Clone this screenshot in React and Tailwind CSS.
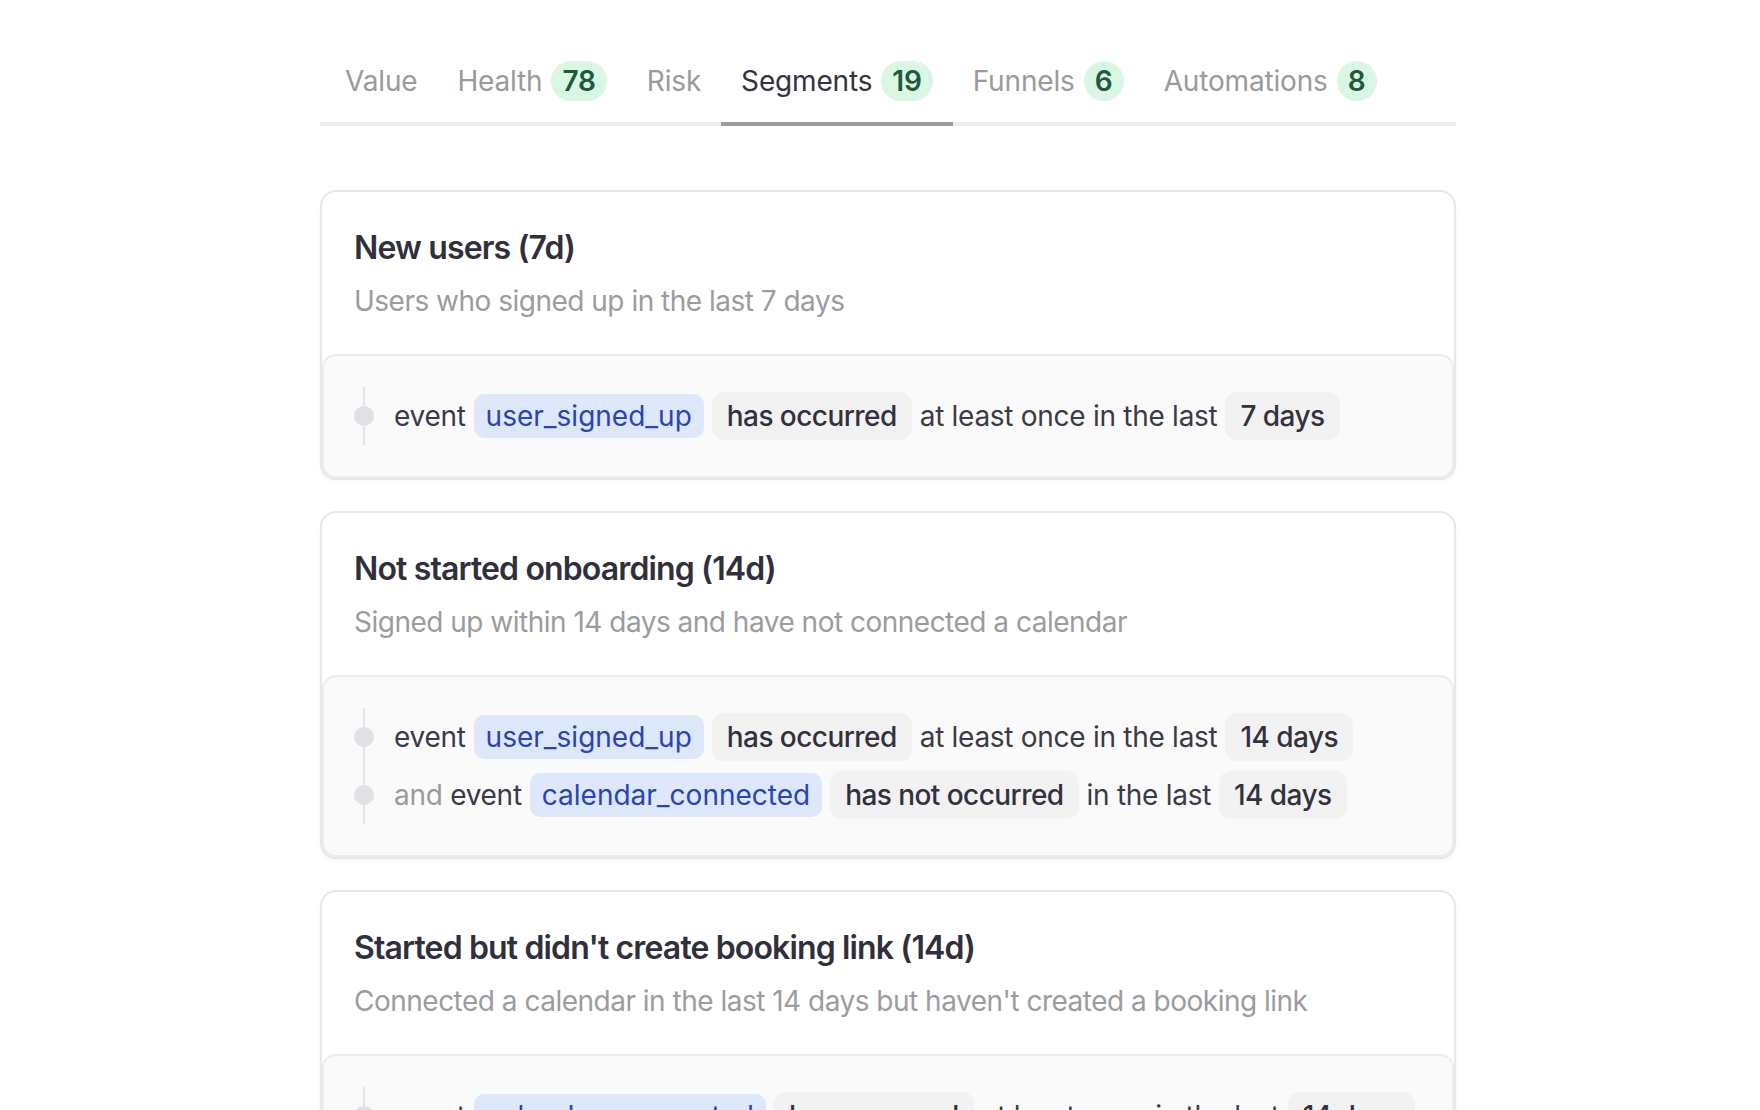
import React from 'react';

const tabs = [
    { label: 'Value' },
    { label: 'Health', count: 78 },
    { label: 'Risk' },
    { label: 'Segments', count: 19, active: true },
    { label: 'Funnels', count: 6 },
    { label: 'Automations', count: 8 },
];

const segments = [
    {
        name: 'New users (7d)',
        description: 'Users who signed up in the last 7 days',
        rules: [
            { event: 'user_signed_up', op: 'has occurred', text: 'at least once in the last', window: '7 days' },
        ],
    },
    {
        name: 'Not started onboarding (14d)',
        description: 'Signed up within 14 days and have not connected a calendar',
        rules: [
            { event: 'user_signed_up', op: 'has occurred', text: 'at least once in the last', window: '14 days' },
            { and: true, event: 'calendar_connected', op: 'has not occurred', text: 'in the last', window: '14 days' },
        ],
    },
    {
        name: "Started but didn't create booking link (14d)",
        description: "Connected a calendar in the last 14 days but haven't created a booking link",
        rules: [
            { event: 'calendar_connected', op: 'has occurred', text: 'at least once in the last', window: '14 days' },
            { and: true, event: 'booking_link_created', op: 'has not occurred', text: 'in the last', window: '14 days' },
        ],
    },
];

const Tab = ({ label, count, active }) => (
    <button
        type="button"
        className={
            '-mb-[4px] flex items-center gap-[9px] border-b-[4px] px-[20px] pt-[20px] pb-[21px] text-[28px] tracking-[-0.006em] ' +
            (active ? 'border-[#9b9b9d] text-[#34343f]' : 'border-transparent text-[#9a9a9c]')
        }
    >
        <span className="leading-[40px]">{label}</span>
        {count !== undefined && (
            <span className="flex h-[40px] min-w-[40px] items-center justify-center rounded-full bg-[#daf7e6] px-[11px] font-semibold text-[#1f5a3d]">
                {count}
            </span>
        )}
    </button>
);

const grayPill = 'flex h-[48px] items-center rounded-[12px] bg-[#f2f2f3] px-[15px] font-medium tracking-[-0.02em] text-[#32323e]';

const RuleRow = ({ rule }) => (
    <div className="flex h-[58px] items-center">
        {/* timeline rail with a dot per condition */}
        <div className="relative flex h-full w-[20px] shrink-0 items-center justify-center">
            <div className="absolute inset-y-0 left-[9px] w-[2px] bg-[#e4e4ea]" />
            <div className="relative h-[20px] w-[20px] rounded-full bg-[#e0e0e7]" />
        </div>
        <div className="ml-[20px] flex items-center gap-[8px] whitespace-nowrap text-[28px] tracking-[-0.01em] text-[#3a3a48]">
            <span>
                {rule.and && <span className="text-[#9a9a9c]">and </span>}
                event
            </span>
            <span className="flex h-[44px] items-center rounded-[10px] bg-[#dde8fb] px-[12px] tracking-normal text-[#2a44b5]">{rule.event}</span>
            <span className={grayPill}>{rule.op}</span>
            <span>{rule.text}</span>
            <span className={grayPill}>{rule.window}</span>
        </div>
    </div>
);

const SegmentCard = ({ segment }) => (
    <div className="rounded-[16px] border-[2px] border-[#e6e6eb] bg-white shadow-[0_2px_4px_rgba(0,0,0,0.03)]">
        <div className="px-[32px] pt-[34px] pb-[33px]">
            <h3 className="text-[32px] font-semibold leading-[44px] tracking-[-0.027em] text-[#30303c]">{segment.name}</h3>
            <p className="mt-[11px] text-[28px] leading-[40px] tracking-[-0.018em] text-[#9c9c9e]">{segment.description}</p>
        </div>
        <div className="rounded-[14px] border-[2px] border-[#ececf0] bg-[#fafafa] px-[30px] pt-[31px] pb-[31px]">
            {segment.rules.map((rule, i) => (
                <RuleRow key={i} rule={rule} />
            ))}
        </div>
    </div>
);

export default function App() {
    return (
        <div className="min-h-screen bg-white pt-[41px] pb-[80px] font-['Inter',sans-serif]">
            <div className="ml-[320px] w-[1136px]">
                <nav className="flex border-b-[4px] border-[#eeeef1] pl-[5px]">
                    {tabs.map(tab => (
                        <Tab key={tab.label} {...tab} />
                    ))}
                </nav>
                <div className="mt-[64px] flex flex-col gap-[31px]">
                    {segments.map(segment => (
                        <SegmentCard key={segment.name} segment={segment} />
                    ))}
                </div>
            </div>
        </div>
    );
}
